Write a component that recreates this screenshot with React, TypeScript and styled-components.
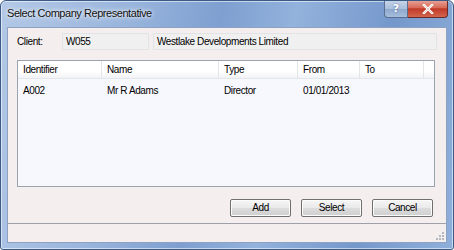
import React from 'react'
import styled, { createGlobalStyle } from 'styled-components'

const GlobalStyle = createGlobalStyle`
  html, body {
    margin: 0;
    padding: 0;
    background: #ffffff;
  }
  body {
    font-family: "Liberation Sans", Arial, sans-serif;
  }
`

const columns = [
  { title: 'Identifier', width: 84 },
  { title: 'Name', width: 117 },
  { title: 'Type', width: 79 },
  { title: 'From', width: 62 },
  { title: 'To', width: 64 },
]

const rows = [
  ['A002', 'Mr R Adams', 'Director', '01/01/2013', ''],
]

const App: React.FC = () => {
  return (
    <>
      <GlobalStyle />
      <StyledWindow>
        <StyledTitleBar>
          <StyledTitle>Select Company Representative</StyledTitle>
          <StyledCaptionButtons>
            <StyledHelpButton>?</StyledHelpButton>
            <StyledCloseButton>
              <svg width="12" height="10" viewBox="0 0 12 10">
                <path d="M2 1 L10 9 M10 1 L2 9" stroke="#ffffff" strokeWidth="2.4" strokeLinecap="square" />
                <path d="M2 1 L10 9 M10 1 L2 9" stroke="#7a2a2a" strokeWidth="0.6" opacity="0.35" />
              </svg>
            </StyledCloseButton>
          </StyledCaptionButtons>
        </StyledTitleBar>

        <StyledClient>
          <StyledClientRow>
            <StyledLabel>Client:</StyledLabel>
            <StyledField width={87}>W055</StyledField>
            <StyledField width={284}>Westlake Developments Limited</StyledField>
          </StyledClientRow>

          <StyledList>
            <StyledHeader>
              {columns.map(c => (
                <StyledHeaderCell key={c.title} width={c.width}>{c.title}</StyledHeaderCell>
              ))}
              <StyledHeaderFiller />
            </StyledHeader>
            {rows.map(r => (
              <StyledRow key={r[0]}>
                {r.map((v, i) => (
                  <StyledCell key={i} width={columns[i].width}>{v}</StyledCell>
                ))}
              </StyledRow>
            ))}
          </StyledList>

          <StyledButtonRow>
            <StyledButton>Add</StyledButton>
            <StyledButton>Select</StyledButton>
            <StyledButton>Cancel</StyledButton>
          </StyledButtonRow>

          <StyledStatusBar>
            <StyledGrip>
              <svg width="10" height="10" viewBox="0 0 10 10">
                <g fill="#b8b8c0">
                  <rect x="7" y="1" width="2" height="2" />
                  <rect x="4" y="4" width="2" height="2" />
                  <rect x="7" y="4" width="2" height="2" />
                  <rect x="1" y="7" width="2" height="2" />
                  <rect x="4" y="7" width="2" height="2" />
                  <rect x="7" y="7" width="2" height="2" />
                </g>
              </svg>
            </StyledGrip>
          </StyledStatusBar>
        </StyledClient>
      </StyledWindow>
    </>
  )
}

const StyledWindow = styled.div`
  width: 454px;
  height: 250px;
  box-sizing: border-box;
  display: flex;
  flex-direction: column;
  border: 1px solid #3c5a86;
  border-radius: 6px 6px 3px 3px;
  background: linear-gradient(100deg, #b3c8e6 0%, #9ab6dd 25%, #7e9fd0 45%, #93b2dc 60%, #7598cc 80%, #8fb0da 100%);
  box-shadow: inset 0 0 0 1px rgba(255, 255, 255, 0.55);
  overflow: hidden;
`

const StyledTitleBar = styled.div`
  height: 26px;
  display: flex;
  align-items: flex-start;
  padding-left: 6px;
  padding-right: 5px;
  flex-shrink: 0;
`

const StyledTitle = styled.div`
  font-size: 11px;
  letter-spacing: -0.45px;
  color: #101010;
  margin-top: 6px;
  flex: 1;
  text-shadow: 0 0 6px rgba(255, 255, 255, 0.9), 0 0 3px rgba(255, 255, 255, 0.9);
`

const StyledCaptionButtons = styled.div`
  display: flex;
  margin-top: -1px;
`

const StyledHelpButton = styled.div`
  width: 24px;
  height: 18px;
  box-sizing: border-box;
  border: 1px solid #5a6f8f;
  border-top: none;
  border-radius: 0 0 0 4px;
  background: linear-gradient(to bottom, #c9d6e8 0%, #aabfdc 50%, #8ea8cc 52%, #a6bddc 100%);
  color: #ffffff;
  font-family: "DejaVu Sans", sans-serif;
  font-weight: bold;
  font-size: 11px;
  text-align: center;
  line-height: 17px;
  text-shadow: 0 0 2px #46618c;
`

const StyledCloseButton = styled.div`
  width: 40px;
  height: 18px;
  box-sizing: border-box;
  border: 1px solid #6b2a2a;
  border-left: none;
  border-top: none;
  border-radius: 0 0 4px 0;
  background: linear-gradient(to bottom, #e8a79b 0%, #d86a58 45%, #c13a28 52%, #d2664f 100%);
  display: flex;
  align-items: center;
  justify-content: center;
`

const StyledClient = styled.div`
  flex: 1;
  margin: 0 6px 6px 6px;
  background: #f5eeee;
  border: 1px solid #8da2c2;
  display: flex;
  flex-direction: column;
  font-size: 10px;
  letter-spacing: -0.4px;
  color: #000000;
`

const StyledClientRow = styled.div`
  display: flex;
  align-items: center;
  padding: 5px 0 0 9px;
  height: 17px;
`

const StyledLabel = styled.div`
  width: 45px;
`

const StyledField = styled.div<{ width: number }>`
  width: ${props => props.width}px;
  height: 17px;
  box-sizing: border-box;
  margin-right: 4px;
  border: 1px solid #e1e3e6;
  background: #f0f0f0;
  padding-left: 3px;
  line-height: 15px;
  white-space: nowrap;
`

const StyledList = styled.div`
  margin: 10px 0 0 9px;
  width: 418px;
  height: 127px;
  box-sizing: border-box;
  border: 1px solid #9aa4ae;
  background: #f7f8fe;
`

const StyledHeader = styled.div`
  display: flex;
  height: 17px;
  background: linear-gradient(to bottom, #ffffff 0%, #ffffff 60%, #f2f3f6 100%);
  border-bottom: 1px solid #e3e6ea;
`

const StyledHeaderCell = styled.div<{ width: number }>`
  width: ${props => props.width}px;
  box-sizing: border-box;
  padding-left: 5px;
  border-right: 1px solid #e3e5e8;
  line-height: 17px;
  white-space: nowrap;
`

const StyledHeaderFiller = styled.div`
  flex: 1;
`

const StyledRow = styled.div`
  display: flex;
  height: 19px;
  margin-top: 2px;
`

const StyledCell = styled.div<{ width: number }>`
  width: ${props => props.width}px;
  box-sizing: border-box;
  padding-left: 5px;
  line-height: 19px;
  white-space: nowrap;
`

const StyledButtonRow = styled.div`
  display: flex;
  justify-content: flex-end;
  gap: 10px;
  padding: 12px 13px 0 0;
  height: 18px;
`

const StyledButton = styled.div`
  width: 61px;
  height: 18px;
  box-sizing: border-box;
  border: 1px solid #707070;
  border-radius: 2px;
  background: linear-gradient(to bottom, #f6f6f6 0%, #eaeaea 48%, #dcdcdc 52%, #cfcfcf 100%);
  box-shadow: inset 0 0 0 1px #fcfcfc;
  text-align: center;
  line-height: 16px;
`

const StyledStatusBar = styled.div`
  margin-top: 6px;
  flex: 1;
  border-top: 1px solid #a0a0a8;
  display: flex;
  align-items: flex-end;
  justify-content: flex-end;
`

const StyledGrip = styled.div`
  width: 10px;
  height: 10px;
  margin: 0 1px 1px 0;
`

export default App
